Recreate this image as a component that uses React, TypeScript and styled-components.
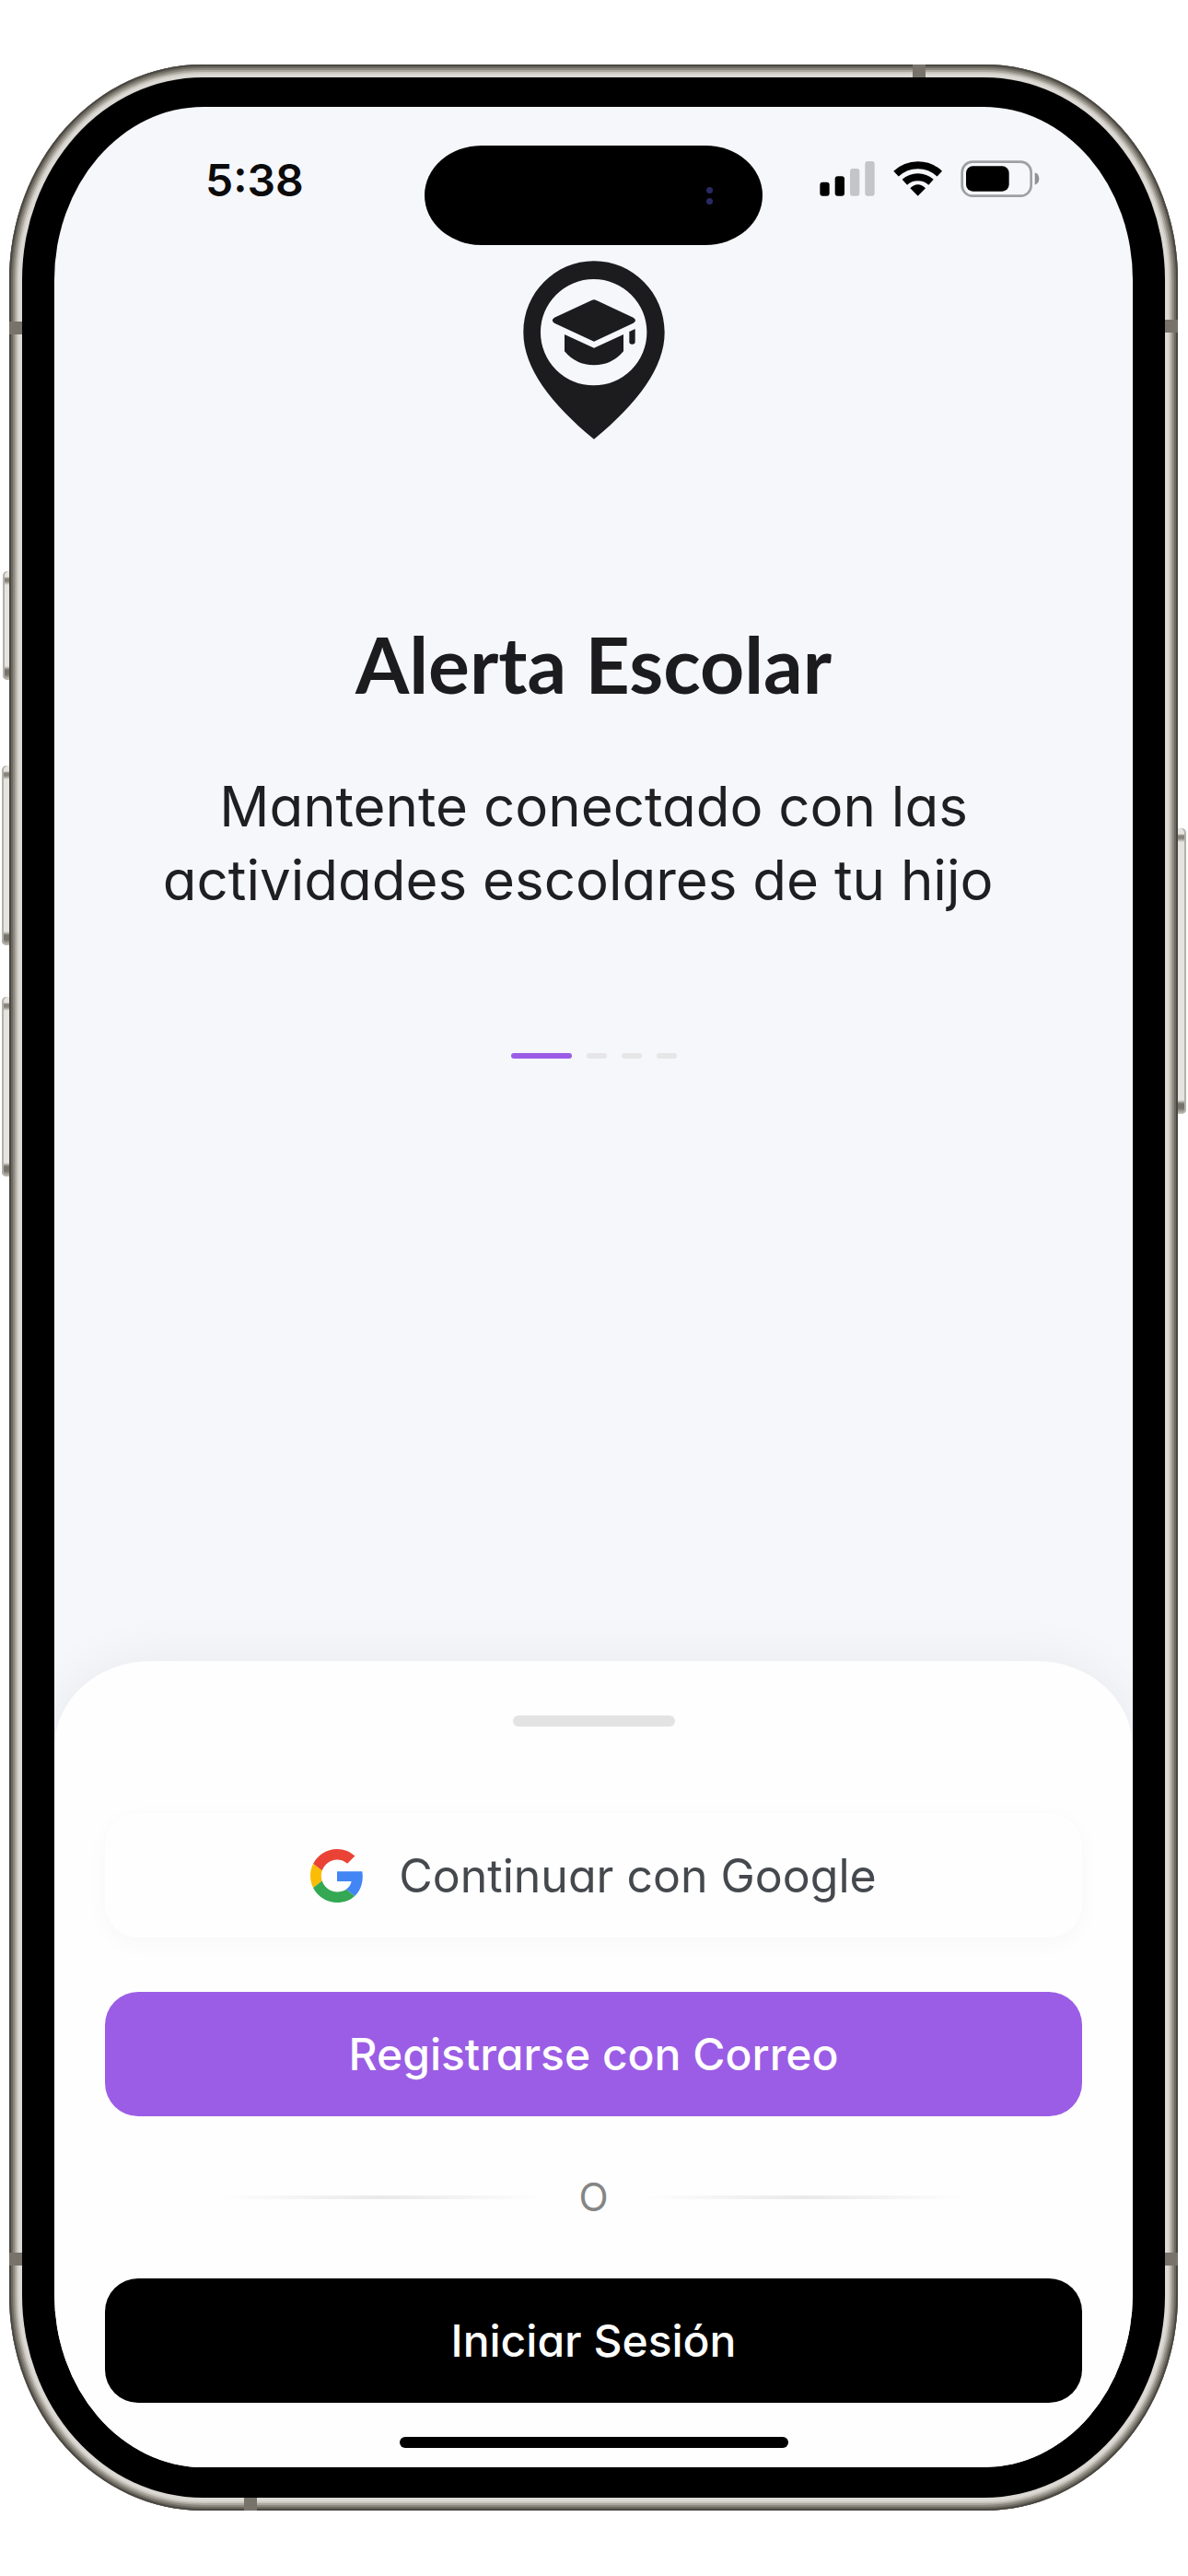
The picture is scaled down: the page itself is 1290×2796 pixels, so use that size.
import React from "react";
import styled, { createGlobalStyle } from "styled-components";

const GlobalStyle = createGlobalStyle`
  *, *::before, *::after { box-sizing: border-box; }
  body { margin: 0; background: #ffffff; }
  button { font: inherit; border: 0; padding: 0; cursor: pointer; }
`;

const bodyFont = `Inter, "Noto Sans", sans-serif`;

const Page = styled.div`
  min-height: 100vh;
  display: flex;
  padding: 70px 11px 71px 10px;
  font-family: ${bodyFont};
  font-feature-settings: "cv11";
`;

const Frame = styled.div`
  position: relative;
  flex: 1;
  display: flex;
  padding: 14px;
  border-radius: 210px / 234px;
  background: #dcd9d4;
  box-shadow: inset 0 0 0 2px #4a4842, inset 0 0 0 4px #6d6961,
    inset 0 0 0 6px #8b877e, inset 0 0 0 8px #aba79f, inset 0 0 0 10px #cbc8c1;
`;

const SideButton = styled.span<{ $side: "left" | "right"; $top: number; $height: number; $depth: number }>`
  position: absolute;
  top: ${(p) => p.$top}px;
  ${(p) => p.$side}: ${(p) => -p.$depth}px;
  width: ${(p) => p.$depth}px;
  height: ${(p) => p.$height}px;
  border-radius: ${(p) => (p.$side === "left" ? "5px 0 0 5px" : "0 5px 5px 0")};
  background: linear-gradient(
    #e6e4e0 0 6px,
    #88847b 8px 11px,
    #e6e4e0 15px calc(100% - 15px),
    #77736a calc(100% - 11px) calc(100% - 6px),
    #c9c6c0
  );
  box-shadow: inset ${(p) => (p.$side === "left" ? "2px" : "-2px")} 0 0 #b3b1a9;
`;

const Antenna = styled.span<{ $edge: "top" | "bottom" | "left" | "right"; $from: "top" | "left" | "right" | "bottom"; $offset: number }>`
  position: absolute;
  ${(p) => p.$edge}: 0;
  ${(p) => p.$from}: ${(p) => p.$offset}px;
  width: 14px;
  height: 14px;
  background: #77736b;
`;

const Bezel = styled.div`
  flex: 1;
  display: flex;
  padding: 32px 35px 33px;
  border-radius: 196px / 220px;
  background: #000000;
`;

const Screen = styled.main`
  flex: 1;
  display: flex;
  flex-direction: column;
  overflow: hidden;
  border-radius: 162px / 188px;
  background: #f5f7fb;
`;

const StatusBar = styled.header`
  display: grid;
  grid-template-columns: 1fr 367px 1fr;
  align-items: start;
  padding-top: 42px;
`;

const Clock = styled.time`
  margin-top: 18px;
  padding-left: 164px;
  font-size: 48px;
  line-height: 40px;
  font-weight: 600;
  color: #0b0b0c;
`;

const Island = styled.div`
  display: flex;
  flex-direction: column;
  align-items: flex-end;
  justify-content: center;
  gap: 5px;
  height: 108px;
  padding-right: 54px;
  border-radius: 62px / 54px;
  background: #000000;
`;

const Lens = styled.span`
  width: 7px;
  height: 7px;
  border-radius: 50%;
  background: #292a63;
`;

const StatusIcons = styled.div`
  display: flex;
  justify-content: flex-end;
  gap: 20px;
  margin-top: 16px;
  padding-right: 101px;
`;

const Hero = styled.section`
  display: flex;
  flex-direction: column;
  align-items: center;
  padding-top: 17px;
`;

const Title = styled.h1`
  margin: 198px 0 68px;
  font-family: Lato, sans-serif;
  font-size: 84px;
  line-height: 92px;
  font-weight: 700;
  color: #1c1c1e;
`;

const Description = styled.p`
  margin: 0;
  font-size: 60px;
  line-height: 80px;
  text-align: center;
  white-space: pre;
  color: #1f1f21;
`;

const Pager = styled.nav`
  display: flex;
  gap: 16px;
  margin-top: 148px;
`;

const PageMark = styled.button<{ $active?: boolean }>`
  width: ${(p) => (p.$active ? 66 : 22)}px;
  height: 6px;
  border-radius: 3px;
  background: ${(p) => (p.$active ? "#9b5de5" : "#e6e6e8")};
`;

const Sheet = styled.section`
  display: flex;
  flex-direction: column;
  align-items: center;
  margin-top: auto;
  padding: 59px 55px 21px;
  border-radius: 104px 104px 0 0 / 94px 94px 0 0;
  background: #fefefe;
  box-shadow: 0 0 60px rgba(0, 0, 0, 0.06);
`;

const Handle = styled.span`
  width: 176px;
  height: 12px;
  border-radius: 6px;
  background: #e3e3e4;
`;

const Actions = styled.div`
  align-self: stretch;
  display: flex;
  flex-direction: column;
  gap: 59px;
  margin: 94px 0 37px;
`;

const tones = {
  plain: { bg: "#fefefe", fg: "#45494e", size: 50, weight: 400, shadow: "0 6px 24px rgba(0, 0, 0, 0.03)" },
  purple: { bg: "#9b5de5", fg: "#ffffff", size: 48, weight: 500, shadow: "none" },
  black: { bg: "#000000", fg: "#ffffff", size: 48, weight: 500, shadow: "none" },
};

const ActionButton = styled.button<{ $tone: keyof typeof tones }>`
  display: flex;
  align-items: center;
  justify-content: center;
  gap: 38px;
  height: 135px;
  border-radius: 36px;
  font-size: ${(p) => tones[p.$tone].size}px;
  line-height: 60px;
  font-weight: ${(p) => tones[p.$tone].weight};
  color: ${(p) => tones[p.$tone].fg};
  background: ${(p) => tones[p.$tone].bg};
  box-shadow: ${(p) => tones[p.$tone].shadow};
`;

const Divider = styled.div`
  display: flex;
  align-items: center;
  gap: 36px;
  padding: 0 124px;
  font-size: 42px;
  line-height: 58px;
  color: #858585;

  &::before,
  &::after {
    content: "";
    flex: 1;
    height: 4px;
    background: linear-gradient(90deg, transparent, #e9e9e9, transparent);
  }
`;

const HomeIndicator = styled.span`
  width: 422px;
  height: 12px;
  border-radius: 6px;
  background: #000000;
`;

const Signal = () => (
  <svg width="60" height="39" viewBox="92 373 180 117" aria-hidden="true">
    <rect x="93" y="444" width="31" height="45" rx="9" />
    <rect x="142" y="425" width="31" height="64" rx="9" />
    <rect x="191" y="400" width="31" height="89" rx="9" fill="#c4c5c9" />
    <rect x="240" y="376" width="31" height="113" rx="9" fill="#c4c5c9" />
  </svg>
);

const Wifi = () => (
  <svg width="53" height="39" viewBox="332 373 159 117" aria-hidden="true">
    <g fill="none" stroke="#000000" strokeWidth="24">
      <path d="M341 417 A103 103 0 0 1 483 417" />
      <path d="M369 444 A64 64 0 0 1 455 444" />
    </g>
    <path d="M412 489 L387 464 Q412 440 437 464Z" />
  </svg>
);

const Battery = () => (
  <svg width="86" height="40" viewBox="552 372 258 120" aria-hidden="true">
    <rect x="557" y="377" width="225" height="111" rx="34" fill="none" stroke="#9fa0a4" strokeWidth="8" />
    <rect x="570" y="391" width="140" height="82" rx="22" />
    <path d="M794 412 Q808 417 808 432 Q808 447 794 452Z" fill="#8f9094" />
  </svg>
);

const PinLogo = () => (
  <svg width="154" height="194" viewBox="411 427 462 582" fill="#1c1c1e" role="img" aria-label="Alerta Escolar">
    <path
      fillRule="evenodd"
      d="M642 428C515 428 412 532 412 660C412 775 500 891 642 1008C784 891 872 775 872 660C872 532 769 428 642 428ZM641 487A173 173 0 1 1 641 833A173 173 0 1 1 641 487Z"
    />
    <path d="M634 556Q642 551 650 556L770 612Q784 621 770 630L642 690L513 630Q500 621 513 612Z" />
    <path d="M546 667L642 711L738 667V722Q700 767 642 767Q584 767 546 722Z" />
    <path d="M757 658L776 649V691Q776 699 766 699Q757 699 757 691Z" />
  </svg>
);

const GoogleLogo = () => (
  <svg width="58" height="58" viewBox="0 0 48 48" aria-hidden="true">
    <path fill="#EA4335" d="M24 9.5c3.54 0 6.71 1.22 9.21 3.6l6.85-6.85C35.9 2.38 30.47 0 24 0 14.62 0 6.51 5.38 2.56 13.22l7.98 6.19C12.43 13.72 17.74 9.5 24 9.5z" />
    <path fill="#4285F4" d="M46.98 24.55c0-1.57-.15-3.09-.38-4.55H24v9.02h12.94c-.58 2.96-2.26 5.48-4.78 7.18l7.73 6c4.51-4.18 7.09-10.36 7.09-17.65z" />
    <path fill="#FBBC05" d="M10.53 28.59c-.48-1.45-.76-2.99-.76-4.59s.27-3.14.76-4.59l-7.98-6.19C.92 16.46 0 20.12 0 24c0 3.88.92 7.54 2.56 10.78l7.97-6.19z" />
    <path fill="#34A853" d="M24 48c6.48 0 11.93-2.13 15.89-5.81l-7.73-6c-2.15 1.45-4.92 2.3-8.16 2.3-6.26 0-11.57-4.22-13.47-9.91l-7.98 6.19C6.51 42.62 14.62 48 24 48z" />
  </svg>
);

export default function App() {
  return (
    <>
      <GlobalStyle />
      <Page>
        <Frame>
          <SideButton $side="left" $top={550} $height={118} $depth={7} />
          <SideButton $side="left" $top={761} $height={195} $depth={8} />
          <SideButton $side="left" $top={1012} $height={195} $depth={8} />
          <SideButton $side="right" $top={829} $height={310} $depth={9} />
          <Antenna $edge="left" $from="top" $offset={279} />
          <Antenna $edge="right" $from="top" $offset={277} />
          <Antenna $edge="left" $from="bottom" $offset={266} />
          <Antenna $edge="right" $from="bottom" $offset={266} />
          <Antenna $edge="top" $from="right" $offset={274} />
          <Antenna $edge="bottom" $from="left" $offset={255} />
          <Bezel>
            <Screen>
              <StatusBar>
                <Clock>5:38</Clock>
                <Island>
                  <Lens />
                  <Lens />
                </Island>
                <StatusIcons>
                  <Signal />
                  <Wifi />
                  <Battery />
                </StatusIcons>
              </StatusBar>

              <Hero>
                <PinLogo />
                <Title>Alerta Escolar</Title>
                <Description>{"Mantente conectado con las\nactividades escolares de tu hijo\u00a0\u00a0"}</Description>
                <Pager aria-label="Páginas">
                  <PageMark $active aria-label="1" aria-current="page" />
                  <PageMark aria-label="2" />
                  <PageMark aria-label="3" />
                  <PageMark aria-label="4" />
                </Pager>
              </Hero>

              <Sheet>
                <Handle />
                <Actions>
                  <ActionButton $tone="plain">
                    <GoogleLogo />
                    Continuar con Google
                  </ActionButton>
                  <ActionButton $tone="purple">Registrarse con Correo</ActionButton>
                  <Divider>O</Divider>
                  <ActionButton $tone="black">Iniciar Sesión</ActionButton>
                </Actions>
                <HomeIndicator />
              </Sheet>
            </Screen>
          </Bezel>
        </Frame>
      </Page>
    </>
  );
}
